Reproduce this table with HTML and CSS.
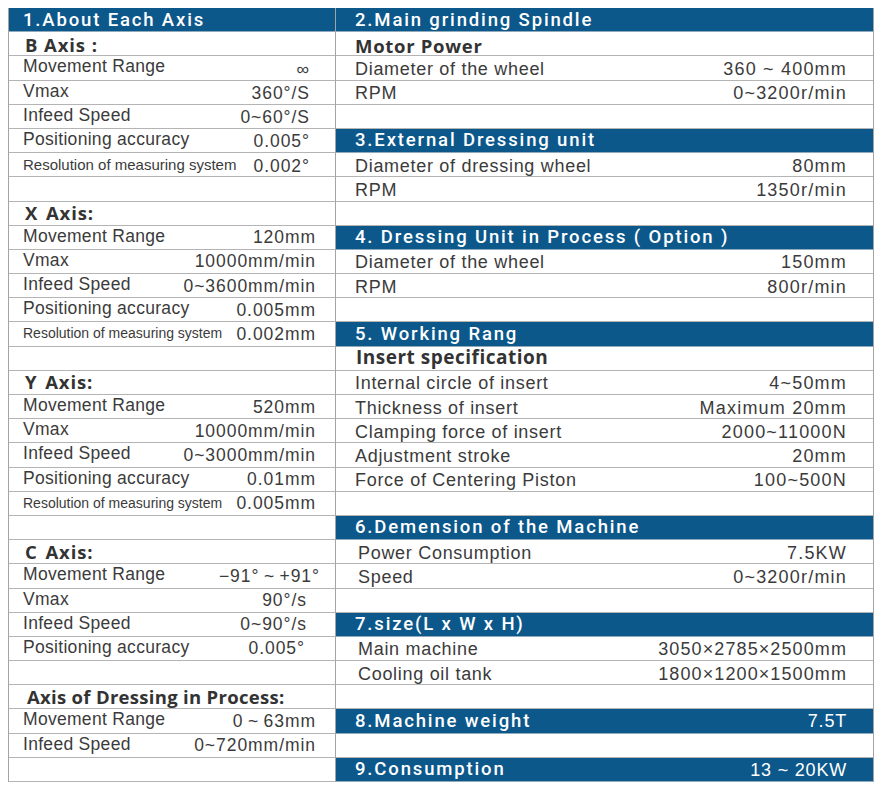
FILE: index.html
```html
<!DOCTYPE html>
<html>
<head>
<meta charset="utf-8">
<title>Specifications</title>
<link rel="stylesheet" href="styles.css">
</head>
<body>
<div class="sheet">
  <div class="col col-left">
    <div class="row head"><span class="h">1.About Each Axis</span></div>
    <div class="row"><span class="sub sub-b">B Axis :</span></div>
    <div class="row"><span class="lab">Movement Range</span><span class="val val-b">∞</span></div>
    <div class="row"><span class="lab">Vmax</span><span class="val val-b">360°/S</span></div>
    <div class="row"><span class="lab">Infeed Speed</span><span class="val val-b">0~60°/S</span></div>
    <div class="row"><span class="lab">Positioning accuracy</span><span class="val val-b">0.005°</span></div>
    <div class="row"><span class="lab lab-res">Resolution of measuring system</span><span class="val val-b">0.002°</span></div>
    <div class="row"></div>
    <div class="row"><span class="sub sub-axis">X Axis:</span></div>
    <div class="row"><span class="lab">Movement Range</span><span class="val">120mm</span></div>
    <div class="row"><span class="lab">Vmax</span><span class="val">10000mm/min</span></div>
    <div class="row"><span class="lab">Infeed Speed</span><span class="val">0~3600mm/min</span></div>
    <div class="row"><span class="lab">Positioning accuracy</span><span class="val">0.005mm</span></div>
    <div class="row"><span class="lab lab-res-sm">Resolution of measuring system</span><span class="val">0.002mm</span></div>
    <div class="row"></div>
    <div class="row"><span class="sub sub-axis">Y Axis:</span></div>
    <div class="row"><span class="lab">Movement Range</span><span class="val">520mm</span></div>
    <div class="row"><span class="lab">Vmax</span><span class="val">10000mm/min</span></div>
    <div class="row"><span class="lab">Infeed Speed</span><span class="val">0~3000mm/min</span></div>
    <div class="row"><span class="lab">Positioning accuracy</span><span class="val">0.01mm</span></div>
    <div class="row"><span class="lab lab-res-sm">Resolution of measuring system</span><span class="val">0.005mm</span></div>
    <div class="row"></div>
    <div class="row"><span class="sub sub-axis">C Axis:</span></div>
    <div class="row"><span class="lab">Movement Range</span><span class="val val-out">−91°&#8201;~&#8201;+91°</span></div>
    <div class="row"><span class="lab">Vmax</span><span class="val val-c">90°/s</span></div>
    <div class="row"><span class="lab">Infeed Speed</span><span class="val val-c">0~90°/s</span></div>
    <div class="row"><span class="lab">Positioning accuracy</span><span class="val val-c2">0.005°</span></div>
    <div class="row"></div>
    <div class="row"><span class="sub sub-in">Axis of Dressing in Process:</span></div>
    <div class="row"><span class="lab">Movement Range</span><span class="val">0&#8201;~&#8201;63mm</span></div>
    <div class="row"><span class="lab">Infeed Speed</span><span class="val">0~720mm/min</span></div>
    <div class="row"></div>
  </div>
  <div class="col col-right">
    <div class="row head"><span class="h">2.Main grinding Spindle</span></div>
    <div class="row"><span class="sub sub-motor">Motor Power</span></div>
    <div class="row"><span class="lab">Diameter of the wheel</span><span class="val">360 ~ 400mm</span></div>
    <div class="row"><span class="lab">RPM</span><span class="val">0~3200r/min</span></div>
    <div class="row"></div>
    <div class="row head"><span class="h">3.External Dressing unit</span></div>
    <div class="row"><span class="lab">Diameter of dressing wheel</span><span class="val">80mm</span></div>
    <div class="row"><span class="lab">RPM</span><span class="val">1350r/min</span></div>
    <div class="row"></div>
    <div class="row head"><span class="h">4. Dressing Unit in Process ( Option )</span></div>
    <div class="row"><span class="lab">Diameter of the wheel</span><span class="val">150mm</span></div>
    <div class="row"><span class="lab">RPM</span><span class="val">800r/min</span></div>
    <div class="row"></div>
    <div class="row head"><span class="h">5. Working Rang</span></div>
    <div class="row"><span class="sub sub-big">Insert specification</span></div>
    <div class="row"><span class="lab">Internal circle of insert</span><span class="val">4~50mm</span></div>
    <div class="row"><span class="lab">Thickness of insert</span><span class="val">Maximum 20mm</span></div>
    <div class="row"><span class="lab">Clamping force of insert</span><span class="val">2000~11000N</span></div>
    <div class="row"><span class="lab">Adjustment stroke</span><span class="val">20mm</span></div>
    <div class="row"><span class="lab">Force of Centering Piston</span><span class="val">100~500N</span></div>
    <div class="row"></div>
    <div class="row head"><span class="h">6.Demension of the Machine</span></div>
    <div class="row"><span class="lab lab-in">Power Consumption</span><span class="val">7.5KW</span></div>
    <div class="row"><span class="lab lab-in">Speed</span><span class="val">0~3200r/min</span></div>
    <div class="row"></div>
    <div class="row head"><span class="h">7.size(L x W x H)</span></div>
    <div class="row"><span class="lab lab-in">Main machine</span><span class="val val-dim">3050×2785×2500mm</span></div>
    <div class="row"><span class="lab lab-in">Cooling oil tank</span><span class="val val-dim">1800×1200×1500mm</span></div>
    <div class="row"></div>
    <div class="row head"><span class="h">8.Machine weight</span><span class="hv">7.5T</span></div>
    <div class="row"></div>
    <div class="row head"><span class="h">9.Consumption</span><span class="hv">13 ~ 20KW</span></div>
  </div>
</div>
</body>
</html>
```

FILE: styles.css
```css
html, body {
  background: #ffffff;
}

body {
  margin: 8px;
  font-family: "Liberation Sans", Arial, sans-serif;
  color: #3b3b3b;
}

.sheet {
  display: grid;
  grid-template-columns: 328px 538px;
  width: 866px;
}

.col {
  display: flex;
  flex-direction: column;
}

.col-left {
  border-left: 1px solid #a4a4a4;
  border-right: 1px solid #a4a4a4;
}

.col-right {
  border-right: 1px solid #a4a4a4;
}

.row {
  box-sizing: border-box;
  height: 24.19px;
  border-bottom: 1px solid #b4b4b4;
  display: flex;
  justify-content: space-between;
  align-items: flex-start;
  white-space: nowrap;
}

.col-left .row {
  padding: 0 19px 0 14px;
}

.col-right .row {
  padding: 0 26px 0 19px;
}

.head {
  background: #0c588b;
  border-bottom-color: #8fa9bd;
  color: #ffffff;
}

.h {
  font-family: Roboto, "Liberation Sans", sans-serif;
  font-weight: 500;
  font-size: 18.5px;
  line-height: 1;
  letter-spacing: 1.85px;
  padding-top: 2.5px;
}

.hv {
  font-size: 18px;
  line-height: 1;
  letter-spacing: 0.8px;
  padding-top: 3px;
}

.lab {
  font-size: 17.5px;
  line-height: 1;
  letter-spacing: 0.3px;
  padding-top: 2px;
}

.lab-res {
  font-size: 15px;
  letter-spacing: 0;
  padding-top: 3.5px;
}

.lab-res-sm {
  font-size: 14px;
  letter-spacing: 0;
  padding-top: 4px;
}

.val {
  font-size: 17.5px;
  line-height: 1;
  letter-spacing: 0.95px;
  padding-top: 3.5px;
}

.val-b {
  margin-right: 6px;
  padding-top: 4.5px;
}

.val-c {
  margin-right: 9px;
}

.val-c2 {
  margin-right: 11px;
}

.val-out {
  margin-right: -4px;
}

.col-right .lab,
.col-right .val {
  font-size: 18px;
  letter-spacing: 0.7px;
  padding-top: 3.5px;
}

.col-right .val {
  letter-spacing: 1.2px;
}

.col-right .val-dim {
  letter-spacing: 1.1px;
}

.lab-in {
  margin-left: 3px;
}

.sub {
  font-family: "Open Sans", "Liberation Sans", sans-serif;
  font-weight: 700;
  font-size: 18.5px;
  line-height: 1;
  letter-spacing: 0.4px;
  color: #333333;
  padding-top: 2.5px;
  margin-left: 2px;
}

.sub-axis {
  letter-spacing: 0.9px;
  word-spacing: 2px;
}

.sub-b {
  padding-top: 4px;
  letter-spacing: 0.9px;
}

.sub-in {
  margin-left: 4px;
  letter-spacing: 0.3px;
}

.sub-motor {
  padding-top: 4.5px;
  margin-left: 0;
  letter-spacing: 0.7px;
}

.sub-big {
  font-size: 19px;
  letter-spacing: 0.5px;
  padding-top: 1px;
  margin-left: 1px;
}
```
